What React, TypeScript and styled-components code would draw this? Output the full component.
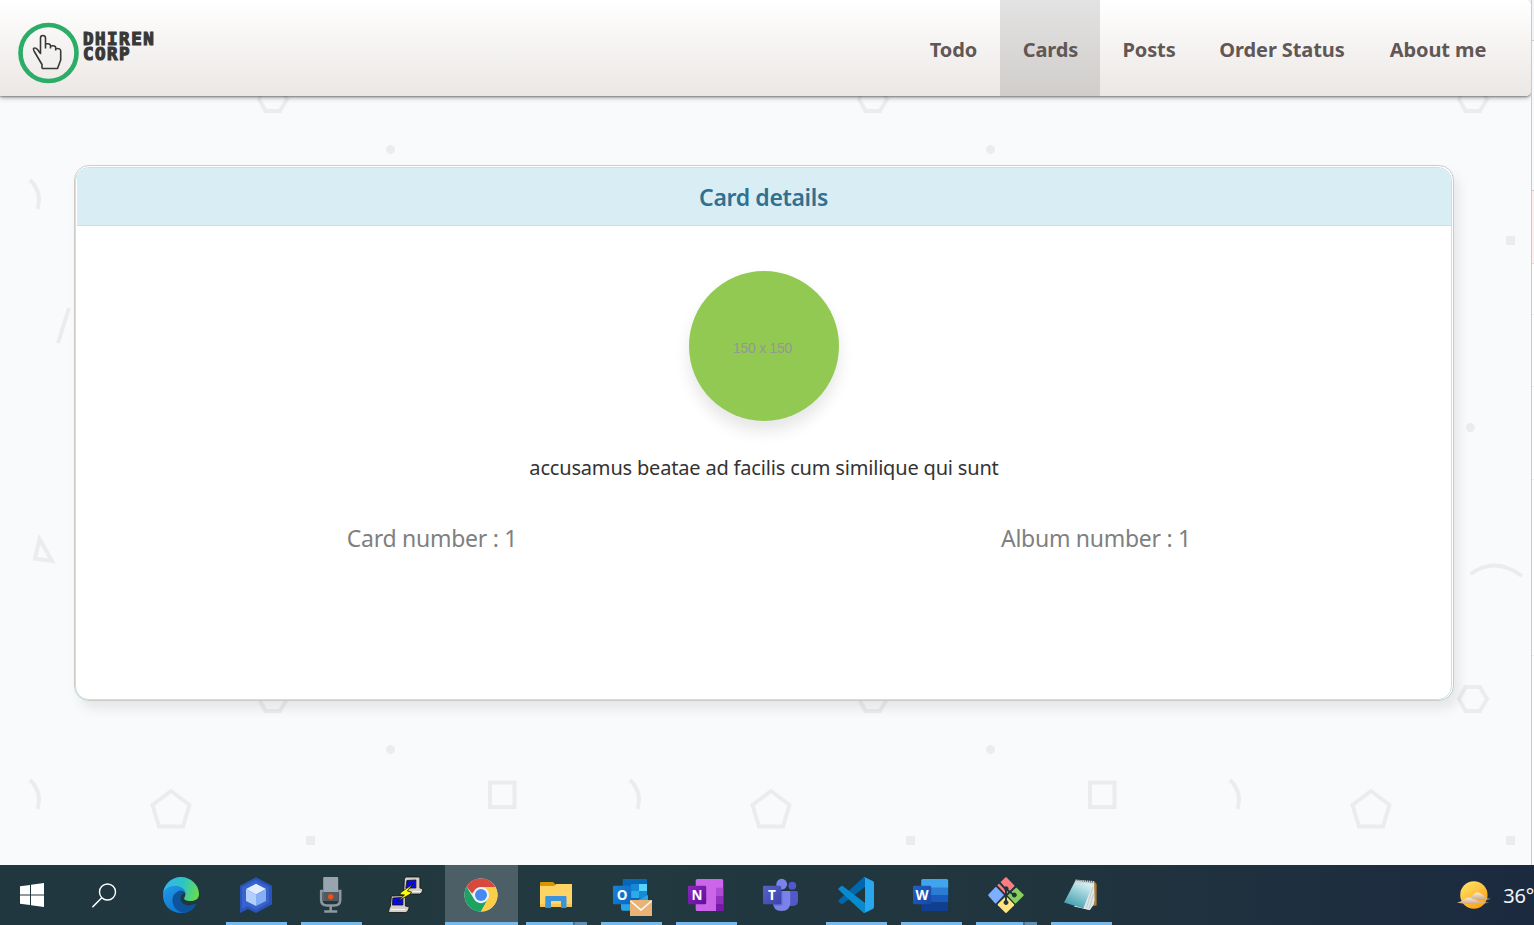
import React from "react";
import styled, { createGlobalStyle } from "styled-components";

const GlobalStyle = createGlobalStyle`
  * { box-sizing: border-box; }
  body { margin: 0; overflow: hidden; font-family: "Noto Sans", "Open Sans", sans-serif; }
`;

const Screen = styled.div`
  width: 1534px;
  height: 925px;
  display: flex;
  flex-direction: column;
  overflow: hidden;
`;

const Workspace = styled.div`
  flex: 1;
  display: flex;
  min-height: 0;
`;

const Page = styled.div`
  position: relative;
  width: 1531px;
  display: flex;
  flex-direction: column;
  background: #f9fafc;
  overflow: hidden;
`;

const Backdrop = styled.svg`
  position: absolute;
  inset: 0;
  width: 100%;
  height: 100%;
`;

const SidePanel = styled.aside`
  width: 3px;
  display: flex;
  flex-direction: column;
  border-left: 1px solid #c8c9cc;
  background: #fff;
`;

const SideRow = styled.div<{ $height: number; $fill: string; $line: string }>`
  height: ${(p) => p.$height}px;
  flex: none;
  background: ${(p) => p.$fill};
  border-bottom: 1px solid ${(p) => p.$line};
`;

const Header = styled.header`
  position: relative;
  height: 96px;
  flex: none;
  display: flex;
  justify-content: space-between;
  padding: 0 22px 0 18px;
  border-radius: 0 5px 5px 0;
  background: linear-gradient(#ffffff, #ebe7e4);
  box-shadow: 0 1px 2px rgba(0, 0, 0, 0.35), 0 2px 5px rgba(0, 0, 0, 0.28);
`;

const Brand = styled.div`
  display: flex;
  align-items: flex-start;
  gap: 4px;
  padding-top: 22px;
`;

const BrandName = styled.div`
  padding-top: 10px;
  font: bold 17.5px/15px "DejaVu Sans Mono", monospace;
  letter-spacing: 1.5px;
  color: #383838;
  -webkit-text-stroke: 1.2px #383838;
`;

const Nav = styled.nav`
  display: flex;
`;

const NavLink = styled.a<{ $width: number; $active?: boolean }>`
  width: ${(p) => p.$width}px;
  display: flex;
  align-items: center;
  justify-content: center;
  padding: 3px 0 0 1px;
  font-size: 20px;
  font-weight: 700;
  letter-spacing: -0.1px;
  white-space: nowrap;
  color: #615756;
  background: ${(p) => (p.$active ? "rgba(0, 0, 0, 0.11)" : "transparent")};
`;

const Card = styled.section`
  position: relative;
  height: 536px;
  margin: 69px 77px 0 74px;
  padding: 1px 1px 0 0;
  border: 1px solid #cfcbc9;
  border-radius: 15px;
  background: #fff;
  box-shadow: 5px 8px 12px rgba(0, 0, 0, 0.08);
`;

const CardInner = styled.div`
  height: 100%;
  padding-left: 1px;
  border: 1px solid #c1e4eb;
  border-radius: 14px;
  overflow: hidden;
  display: flex;
  flex-direction: column;
  align-items: center;
`;

const CardTitle = styled.h1`
  width: 100%;
  height: 58px;
  margin: 0;
  display: flex;
  align-items: center;
  justify-content: center;
  padding-right: 1px;
  border-bottom: 1px solid #c1e4eb;
  background: #d9edf5;
  color: #31708f;
  font-size: 23px;
  font-weight: 600;
  letter-spacing: -0.35px;
`;

const Avatar = styled.div`
  width: 150px;
  height: 150px;
  margin-top: 45px;
  padding: 3px 3px 0 0;
  border-radius: 50%;
  display: flex;
  align-items: center;
  justify-content: center;
  background: #92c952;
  color: #969696;
  font: 14px "Liberation Sans", sans-serif;
  letter-spacing: -0.3px;
  box-shadow: 0 10px 16px rgba(0, 0, 0, 0.1);
`;

const Caption = styled.p`
  margin: 33px 0 0;
  font-size: 20px;
  line-height: 28px;
  color: #333;
  letter-spacing: -0.18px;
`;

const Facts = styled.div`
  width: 1328px;
  margin-top: 40px;
  display: grid;
  grid-template-columns: 1fr 1fr;
  text-align: center;
`;

const Fact = styled.span`
  font-size: 23px;
  line-height: 32px;
  letter-spacing: -0.27px;
  color: #808080;
`;

const Taskbar = styled.footer`
  height: 60px;
  flex: none;
  display: flex;
  background: linear-gradient(90deg, #21373f, #223940 40%, #20343e 70%, #1c2a40);
`;

const SystemButton = styled.div<{ $width: number }>`
  width: ${(p) => p.$width}px;
  display: flex;
  align-items: center;
  justify-content: center;
`;

const Apps = styled.div`
  display: flex;
  gap: 2px;
`;

const AppButton = styled.div<{ $active?: boolean }>`
  width: 73px;
  display: flex;
  flex-direction: column;
  align-items: center;
  justify-content: space-between;
  padding-top: 12px;
  background: ${(p) => (p.$active ? "#4c5f66" : "transparent")};
`;

const AppIcon = styled.svg`
  width: 36px;
  height: 36px;
  margin-right: 1px;
  overflow: visible;
`;

const Indicator = styled.div<{ $wide?: boolean; $stacked?: boolean }>`
  width: ${(p) => (p.$wide ? 73 : 61)}px;
  height: 3px;
  background: ${(p) =>
    p.$stacked
      ? "linear-gradient(90deg, #76b9ed 47px, #47718e 47px, #47718e 49px, #5d91b8 49px)"
      : "#76b9ed"};
`;

const Weather = styled.div`
  flex: none;
  width: 78px;
  margin-left: auto;
  display: flex;
  align-items: center;
  gap: 12px;
  padding-top: 1px;
  color: #f3f5f6;
  font-size: 20px;
  letter-spacing: -0.2px;
  white-space: nowrap;
`;

const Letter = ({ children, top, bottom }: { children: string; top: string; bottom: string }) => {
  const id = "tile" + children;
  return (
    <g>
      <defs>
        <linearGradient id={id} x1="0" y1="0" x2="1" y2="1">
          <stop stopColor={top} />
          <stop offset="1" stopColor={bottom} />
        </linearGradient>
      </defs>
      <rect y="8.8" width="18.2" height="18.4" rx="1.3" fill={`url(#${id})`} />
      <text x="9" y="22.7" textAnchor="middle" fill="#fff" fontFamily="Open Sans, sans-serif" fontWeight="700" fontSize="13.5">
        {children}
      </text>
    </g>
  );
};

const EdgeIcon = () => (
  <>
    <defs>
      <linearGradient id="edgeTop" x1="0" y1=".4" x2="1" y2=".6">
        <stop stopColor="#35b5ee" />
        <stop offset=".5" stopColor="#2cc3c8" />
        <stop offset="1" stopColor="#68dd4c" />
      </linearGradient>
      <linearGradient id="edgeLow" x1="0" y1="0" x2=".7" y2="1">
        <stop stopColor="#2198e8" />
        <stop offset="1" stopColor="#0b74cc" />
      </linearGradient>
    </defs>
    <path d="M0 18C0 8 8 0 18 0s18 8 18 17c0 5-4 7-8 7-5 0-8-1.300-6.500-3.500 3-5-1-11-9-11C6 9.500 1 13 0 18Z" fill="url(#edgeTop)" />
    <path d="M0 17.500C1 12 6 9 12 9c6 0 10.500 3.500 10.500 8-1-2.500-3.500-4-6-3-7 3-5 16 5 18 4 1 8 0 9.500-1C28 34 23 36 18 36 7.500 36-.5 28 0 17.500Z" fill="url(#edgeLow)" />
    <path d="M17 13.800C12 15 9 19 9.500 24c.5 7 6.500 12 12 11.700C27 35 31 31.500 33 28c.5-1-.3-1.500-1.200-1-7 3.500-15 0-14.300-6.500.2-2.500 2-3.500 3.500-4-.8-1.500-2.200-2.700-4-2.700Z" fill="#0d549d" />
  </>
);

const CubeIcon = () => (
  <>
    <path d="M18 .3 34 8.700v18.600L18 36l-8-4-8 4V8.700Z" fill="#2b53ba" />
    <path d="m18 3 13 7v15.500L18 33l-9-4-5 3V10Z" fill="#3763cc" />
    <path d="m18 6.700 10 5.300-10 5.500L8 12Z" fill="#e3edff" />
    <path d="m8 12 10 5.500V29L8 24Z" fill="#b4cffb" />
    <path d="M28 12 18 17.500V29l10-5Z" fill="#85aef4" />
  </>
);

const RecorderIcon = () => (
  <g transform="translate(-.8 0)">
    <rect x="11" y="0" width="15" height="24" rx="1" fill="#98a4ae" />
    <path d="M11 15h15v8a1 1 0 0 1-1 1H12a1 1 0 0 1-1-1Z" fill="#525a60" />
    <circle cx="18.500" cy="19.700" r="2.700" fill="#ed501c" />
    <path d="M11 14H9v9q0 5.500 6 5.500h7q6 0 6-5.500v-9h-2M18.500 29v5M12 34.500h13" fill="none" stroke="#8c979f" strokeWidth="2.600" />
  </g>
);

const PuttyIcon = () => (
  <g stroke="#111" strokeWidth=".8" transform="translate(-.6 0)">
    <path d="m16.500 12 .5-10.500 2-1.500h12.500l1 1v10l3 1-1 3.500-2 1.500H15l1-4Z" fill="#d4d0c8" />
    <path d="m19.500 3.500 9-.5v8h-10Z" fill="#0808ee" />
    <path d="m3 29.500 1-10.500 14-.3V29l4 1-1.500 4-2 1.500H1L2 31Z" fill="#d4d0c8" />
    <path d="m5.500 21 10-.5V28H5Z" fill="#0808ee" />
    <path d="m25.500 7-11.500 8-2 2.500 5 .5-7 6.500L23 17l1-2-4-1Z" fill="#fdfd00" />
    <path d="M3 32.500h15" stroke="#fff" />
    <path d="M25 14.500h8" stroke="#fff" />
  </g>
);

const ChromeIcon = () => (
  <>
    <circle cx="18" cy="18" r="16.600" fill="#e6edea" />
    <path d="M3.600 9.800A16.600 16.600 0 0 1 32.500 10H18a8 8 0 0 0-7.200 4.500l-1.700 2Z" fill="#d9483c" />
    <path d="M3.600 9.800A16.600 16.600 0 0 0 18 34.600l7-12.500a8 8 0 0 1-14 0Z" fill="#1ca362" />
    <path d="M32.500 10A16.600 16.600 0 0 1 18 34.600l7-12.500A8 8 0 0 0 18 10Z" fill="#fccd48" />
    <circle cx="18" cy="18" r="7.500" fill="#f1f4f8" />
    <circle cx="18" cy="18" r="6" fill="#4788f1" />
  </>
);

const FolderIcon = () => (
  <>
    <path d="M2 6q0-1 1-1h12l2 2v5H2Z" fill="#dc9500" />
    <path d="M2 9h14l2-2h16v22q0 1-1 1H3q-1 0-1-1Z" fill="#ffd465" />
    <path d="M2 27h32v2q0 1-1 1H3q-1 0-1-1Z" fill="#f8c64d" />
    <path d="M7.300 31V20q0-1 1-1H27.500q1 0 1 1v11H23v-7H13v7Z" fill="#3b93dc" />
  </>
);

const OutlookIcon = () => (
  <>
    <path d="M9.700 3q0-1 1-1H33q1 0 1 1v20H9.700Z" fill="#0867b6" />
    <path d="M18 7h8v7h-8Z" fill="#1688d6" />
    <path d="M26 7h8v7h-8Z" fill="#56d5f9" />
    <path d="M18 14h8v7h-8Z" fill="#2caaea" />
    <path d="M26 14h8v7h-8Z" fill="#1689d7" />
    <path d="m8 20 13 5 14-7v14q0 1.700-2 1.700H10q-2 0-2-2Z" fill="#29a5e6" />
    <Letter top="#1683d8" bottom="#0868c5">O</Letter>
    <path d="M17 23h22v16H17Z" fill="#eab275" />
    <path d="m17.500 24 10.500 9 10.500-9" fill="none" stroke="#fff" strokeWidth="1.500" />
  </>
);

const OneNoteIcon = () => (
  <>
    <rect x="7.700" y="2" width="27.500" height="32" rx="1.600" fill="#cb65e9" />
    <path d="M28 10.700h7.200V19H28Z" fill="#b04bd6" />
    <path d="M28 19h7.200v7.500H28Z" fill="#922fbd" />
    <path d="M28 26.500h7.200v6q0 1.500-1.500 1.500H28Z" fill="#7719aa" />
    <Letter top="#8c27bd" bottom="#610f99">N</Letter>
  </>
);

const TeamsIcon = () => (
  <>
    <circle cx="29.300" cy="8.700" r="3.900" fill="#5059c9" />
    <path d="M25 14h8.500q1.500 0 1.500 1.500V24q0 5-6 5h-4Z" fill="#5059c9" />
    <circle cx="18.700" cy="7.200" r="5.400" fill="#7b83eb" />
    <path d="M10 14h16q1.300 0 1.300 1.300V25q0 9-8.700 9T10 25Z" fill="#7b83eb" />
    <path d="M10 14h9.500v14.500h-9Z" fill="#4e56ba" opacity=".55" />
    <Letter top="#5862c4" bottom="#3b43ac">T</Letter>
  </>
);

const CodeIcon = () => (
  <>
    <path d="M.6 24.700Q0 24 .6 23.300L25 .7Q26 0 27 .3L27 10 5 26.800q-1 .8-2 0Z" fill="#0067ad" />
    <path d="M.6 12.700Q0 12 .6 11.300L3 9.200q1-.8 2 0L27 26v9.500q-1 .8-2 0Z" fill="#078ad0" />
    <path d="M25 35.500q1.500.7 2-.7V1.200Q26.500 0 25 .6l1.300-.5 8.500 4Q36 4.700 36 6v24q0 1.300-1.200 1.900l-8.500 4Z" fill="#27a7ee" />
  </>
);

const WordIcon = () => (
  <>
    <path d="M8.200 3.500Q8.200 2 9.700 2h24q1.500 0 1.500 1.500V11h-27Z" fill="#41a5ee" />
    <path d="M8.200 10.500h27V18h-27Z" fill="#2b7cd3" />
    <path d="M8.200 18h27v7.500h-27Z" fill="#185abd" />
    <path d="M8.200 25.500h27v7q0 1.500-1.500 1.500h-24q-1.500 0-1.500-1.500Z" fill="#103f91" />
    <Letter top="#205fc4" bottom="#1549a9">W</Letter>
  </>
);

const GitIcon = () => (
  <>
    <path d="m18.700.4 7.500 7.800q.5.600 0 1.200L20.500 15 18 17.500 9.300 8.300 17.300.5q.8-.7 1.400-.1Z" fill="#fb7d80" />
    <path d="m28.300 10.500 7.200 7q.5.600 0 1.200l-7.500 7.500q-.6.500-1.200 0L19.500 18.500Z" fill="#88d05b" />
    <path d="m8.500 10.300 7.500 7.700-7.800 8.200q-.6.500-1.200 0L.4 18.700q-.6-.6 0-1.200l6.900-7.200q.6-.5 1.200 0Z" fill="#7daeff" />
    <path d="m18 19 8 8.200q.5.600 0 1.200l-7.400 7.300q-.6.500-1.200 0l-7.500-7.500q-.5-.6 0-1.200Z" fill="#ffe47f" />
    <g stroke="#20343e" fill="#20343e">
      <path d="m11.500 5.500 6.500 7v12M18 12l8 6" fill="none" strokeWidth="1.900" />
      <circle cx="18.300" cy="11.500" r="1.800" />
      <circle cx="18" cy="25.500" r="2" />
      <circle cx="26.300" cy="18" r="2" />
    </g>
  </>
);

const NotepadIcon = () => (
  <g transform="translate(-1 0)">
    <defs>
      <linearGradient id="notepad" x1=".7" y1="0" x2=".2" y2="1">
        <stop stopColor="#dff5f6" />
        <stop offset="1" stopColor="#3498a9" />
      </linearGradient>
    </defs>
    <path d="m32 4 2.600 3v21.500l-5 .5Z" fill="#a8803f" />
    <path d="m32 4 .5 20-5 9L12 29.500Z" fill="#eef3f3" />
    <path d="M13.500 3.500 31.500 6 21.500 31.500 2 25.500Z" fill="url(#notepad)" />
    <path d="m31.500 6 .5 21-4 6-6.500-1.500Z" fill="#dfe6e7" />
    <path d="m31 10-6.500 21M31.500 17 27 32" stroke="#aebfc2" strokeWidth=".7" />
    <path d="m13.500 4 18.500 1.500" stroke="#c9cccc" strokeWidth="3" strokeDasharray="1.300 .6" />
  </g>
);

type TaskbarApp = { name: string; icon: React.FC; open?: boolean; active?: boolean; stacked?: boolean };

const apps: TaskbarApp[] = [
  { name: "Edge", icon: EdgeIcon },
  { name: "Cube", icon: CubeIcon, open: true },
  { name: "Recorder", icon: RecorderIcon, open: true },
  { name: "PuTTY", icon: PuttyIcon },
  { name: "Chrome", icon: ChromeIcon, open: true, active: true },
  { name: "Explorer", icon: FolderIcon, open: true, stacked: true },
  { name: "Outlook", icon: OutlookIcon, open: true },
  { name: "OneNote", icon: OneNoteIcon, open: true },
  { name: "Teams", icon: TeamsIcon },
  { name: "Code", icon: CodeIcon, open: true },
  { name: "Word", icon: WordIcon, open: true },
  { name: "Git", icon: GitIcon, open: true, stacked: true },
  { name: "Notepad", icon: NotepadIcon, open: true },
];

const navItems = [
  { label: "Todo", width: 94 },
  { label: "Cards", width: 100, active: true },
  { label: "Posts", width: 97 },
  { label: "Order Status", width: 169 },
  { label: "About me", width: 143 },
];

const sideRows = [
  { height: 41, fill: "#f1f3f4", line: "#cacdd1" },
  { height: 150, fill: "#f8f9fa", line: "#d5c5c5" },
  { height: 73, fill: "#fff0f0", line: "#f6d3d3" },
  { height: 51, fill: "#fff", line: "#efefef" },
  { height: 72, fill: "#fff", line: "#efefef" },
  { height: 93, fill: "#fff", line: "#efefef" },
  { height: 176, fill: "#fff", line: "#efefef" },
];

const ShapesBackdrop = () => (
  <Backdrop>
    <defs>
      <pattern id="shapes" width="600" height="600" patternUnits="userSpaceOnUse">
        <g fill="none" stroke="#ebecee" strokeWidth="4">
          <path d="M265.500 87h14.500l7 12-7 12h-14.500l-6.500-12Z" />
          <path d="M30 180q12.500 12 7.500 29" />
          <path d="m171 191 18.500 14-6.500 21.500h-24L152.500 205Z" />
          <path d="M490 182.500h24.500V207H490Z" />
          <path d="m69 308-11 35" />
          <path d="m39.500 539 12.500 22-17-2.500Z" />
          <path d="M270.500 574q25-18 51.500 2" />
        </g>
        <g fill="#ebecee">
          <circle cx="390.500" cy="149.500" r="4.500" />
          <circle cx="270.500" cy="427.500" r="4.500" />
          <rect x="306" y="236" width="9" height="9" />
        </g>
      </pattern>
    </defs>
    <rect width="100%" height="100%" fill="url(#shapes)" />
  </Backdrop>
);

export default function App() {
  return (
    <Screen>
      <GlobalStyle />
      <Workspace>
        <Page>
          <ShapesBackdrop />
          <Header>
            <Brand>
              <svg width="61" height="62" viewBox="0 0 61 62" fill="none">
                <circle cx="30.500" cy="31" r="28" stroke="#2bad68" strokeWidth="4.600" />
                <path
                  d="M24 46.500v-4L16.300 29.500Q14.500 26 16.500 26q1.500-.3 3 1.500l3 4V16q0-2.500 2.400-2.500t2.600 2.500v10.500m0-4.500q5-.8 5 2v2.500m0-2.500q5.200-1 5.200 2v2.500m0-2q5-.5 5 2.500v9L39.500 46.500H24"
                  stroke="#383838"
                  strokeWidth="1.600"
                  strokeLinejoin="round"
                />
              </svg>
              <BrandName>
                DHIREN
                <br />
                CORP
              </BrandName>
            </Brand>
            <Nav>
              {navItems.map((item) => (
                <NavLink key={item.label} $width={item.width} $active={item.active}>
                  {item.label}
                </NavLink>
              ))}
            </Nav>
          </Header>
          <Card>
            <CardInner>
              <CardTitle>Card details</CardTitle>
              <Avatar>150 x 150</Avatar>
              <Caption>accusamus beatae ad facilis cum similique qui sunt</Caption>
              <Facts>
                <Fact>Card number : 1</Fact>
                <Fact>Album number : 1</Fact>
              </Facts>
            </CardInner>
          </Card>
        </Page>
        <SidePanel>
          {sideRows.map((row, i) => (
            <SideRow key={i} $height={row.height} $fill={row.fill} $line={row.line} />
          ))}
        </SidePanel>
      </Workspace>
      <Taskbar>
        <SystemButton $width={64}>
          <svg width="24" height="24" viewBox="0 0 24 24" fill="#fff">
            <path d="M0 3.300 10 2v9.400H0ZM11 1.800 24 0v11.400H11ZM0 12.500h10V22L0 20.700ZM11 12.500h13V24l-13-1.800Z" />
          </svg>
        </SystemButton>
        <SystemButton $width={81}>
          <svg width="25" height="25" viewBox="0 0 25 25" fill="none" stroke="#fff" strokeWidth="1.400">
            <circle cx="15.500" cy="9" r="8" />
            <path d="M9.800 14.700.4 24.200" />
          </svg>
        </SystemButton>
        <Apps>
          {apps.map(({ name, icon: Icon, open, active, stacked }) => (
            <AppButton key={name} $active={active}>
              <AppIcon viewBox="0 0 36 36">
                <Icon />
              </AppIcon>
              {open && <Indicator $wide={active} $stacked={stacked} />}
            </AppButton>
          ))}
        </Apps>
        <Weather>
          <svg width="36" height="30" viewBox="0 0 36 30">
            <defs>
              <linearGradient id="sun" x1=".1" y1="0" x2=".8" y2="1">
                <stop stopColor="#ffe56b" />
                <stop offset="1" stopColor="#ff9d0d" />
              </linearGradient>
              <linearGradient id="cloud" x1="0" y1="0" x2="0" y2="1">
                <stop stopColor="#f7ead8" />
                <stop offset="1" stopColor="#c9a684" />
              </linearGradient>
            </defs>
            <circle cx="18.300" cy="14" r="14" fill="url(#sun)" />
            <path d="M12 17q5-1 6-4 4-3 8 0 3 1 4 4l6 1q-12 2-20 0Z" fill="url(#cloud)" />
            <path d="M1 22q5-1 8-4 4-3 8 0 4 0 6 3l11 1q-17 3-33 0Z" fill="url(#cloud)" />
          </svg>
          <span>36°</span>
        </Weather>
      </Taskbar>
    </Screen>
  );
}
